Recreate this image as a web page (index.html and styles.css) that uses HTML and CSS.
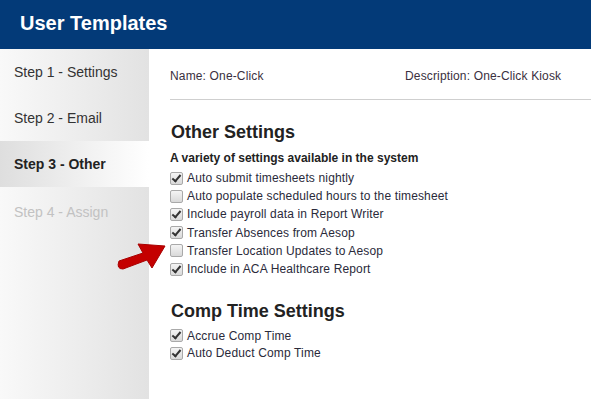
FILE: index.html
```html
<!DOCTYPE html>
<html>

<head>
    <title>User Templates</title>
    <link rel="stylesheet" href="styles.css">
</head>

<body>
    <div class="header">User Templates</div>
    <div class="page">
        <div class="sidebar">
            <div class="step">Step 1 - Settings</div>
            <div class="step">Step 2 - Email</div>
            <div class="step active">Step 3 - Other</div>
            <div class="step disabled">Step 4 - Assign</div>
        </div>
        <div class="main">
            <div class="info">
                <span class="name">Name: One-Click</span>
                <span class="desc">Description: One-Click Kiosk</span>
            </div>
            <h2>Other Settings</h2>
            <div class="subtitle">A variety of settings available in the system</div>
            <ul class="options">
                <li><span class="box checked"></span>Auto submit timesheets nightly</li>
                <li><span class="box"></span>Auto populate scheduled hours to the timesheet</li>
                <li><span class="box checked"></span>Include payroll data in Report Writer</li>
                <li><span class="box checked"></span>Transfer Absences from Aesop</li>
                <li><span class="box"></span>Transfer Location Updates to Aesop</li>
                <li><span class="box checked"></span>Include in ACA Healthcare Report</li>
            </ul>
            <h2 class="second">Comp Time Settings</h2>
            <ul class="options short">
                <li><span class="box checked"></span>Accrue Comp Time</li>
                <li><span class="box checked"></span>Auto Deduct Comp Time</li>
            </ul>
        </div>
    </div>
    <!-- annotation arrow pointing at the unchecked option -->
    <svg class="arrow" width="54" height="36" viewBox="0 0 54 36">
        <path d="M5 23 L29 15 L24 6 L51 8 L38 30 L33 22 L9 31 Q2 31 5 23 Z" fill="#c40000" stroke="#a80000" stroke-width="1" stroke-linejoin="round" />
    </svg>
</body>

</html>
```

FILE: styles.css
```css
body {
    margin: 0;
    font-family: 'Liberation Sans', Arial, sans-serif;
    background-color: white;
    color: #2b2b2b;
}

.header {
    height: 49px;
    line-height: 47px;
    padding-left: 20px;
    background-color: #033a78;
    color: white;
    font-size: 20px;
    font-weight: bold;
}

.page {
    display: flex;
    min-height: 350px;
}

.sidebar {
    width: 149px;
    flex-shrink: 0;
    background: linear-gradient(to right, #f9f9f9, #e2e2e2);
}

.step {
    height: 46px;
    line-height: 46px;
    padding-left: 14px;
    font-size: 14px;
    color: #333;
}

.step.active {
    font-weight: bold;
    color: #222;
    background: linear-gradient(to right, #dedede, #ffffff);
}

.step.disabled {
    padding-top: 2px;
    color: #c2c2c2;
}

.main {
    flex: 1;
    padding-left: 21px;
}

.info {
    display: flex;
    padding-top: 20px;
    padding-bottom: 16px;
    border-bottom: 1px solid #cfcfcf;
    font-size: 12px;
    letter-spacing: 0.15px;
    color: #3a3040;
}

.name {
    width: 235px;
}

h2 {
    margin: 22px 0 0 1px;
    font-size: 18px;
    font-weight: bold;
    color: #222;
}

h2.second {
    margin-top: 23px;
}

.subtitle {
    margin-top: 8px;
    font-size: 12px;
    font-weight: bold;
    color: #222;
}

.options {
    list-style: none;
    margin: 4px 0 0 0;
    padding: 0;
}

.options.short {
    margin-top: 5px;
}

.options li {
    display: flex;
    align-items: center;
    height: 18.2px;
    font-size: 12px;
    letter-spacing: 0.15px;
    color: #2a2a3a;
}

.options.short li {
    height: 17.5px;
}

.box {
    width: 11px;
    height: 11px;
    margin-right: 4px;
    border: 1px solid #a9a9a9;
    border-radius: 2px;
    background: linear-gradient(#f4f4f4, #d9d9d9);
    position: relative;
}

.box.checked::after {
    content: "";
    position: absolute;
    left: 3px;
    top: 0px;
    width: 3px;
    height: 7px;
    border: solid #333;
    border-width: 0 2px 2px 0;
    transform: rotate(40deg);
}

.arrow {
    position: absolute;
    left: 114px;
    top: 238px;
}
```
